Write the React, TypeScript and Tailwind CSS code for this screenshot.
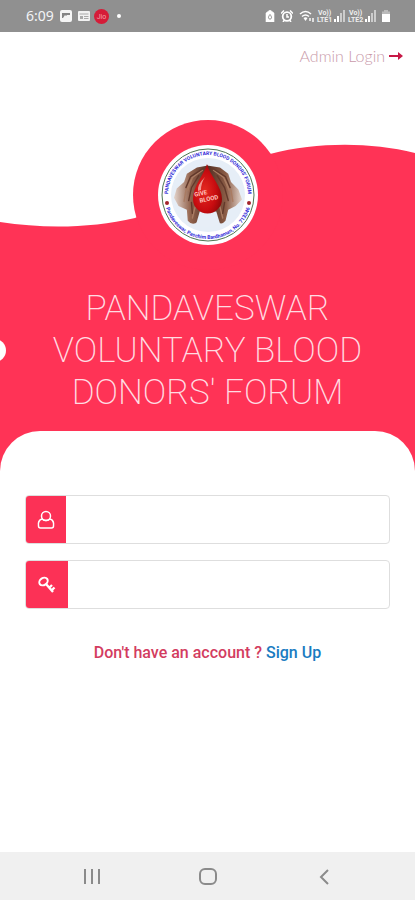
import type { ReactNode } from "react";

function StatusBar() {
  return (
    <header className="flex h-8 shrink-0 items-center justify-between bg-[#909090] pr-6 pl-[26px] text-white">
      <div className="flex items-center">
        <span className="font-['Noto_Sans','Roboto',sans-serif] text-sm text-gray-100">6:09</span>
        <svg className="ml-1.5 h-3 w-3" viewBox="0 0 12 12" aria-hidden="true">
          <rect width="12" height="12" rx="2" fill="#f5f5f5" />
          <path d="M2 8V3h8v2L7 5 6 6 5 5 3 8Z" fill="#858585" />
        </svg>
        <svg className="ml-1.5 h-3 w-3" viewBox="0 0 12 12" aria-hidden="true">
          <rect y="1" width="12" height="10" rx="1" fill="#f2f2f2" />
          <path d="M1.500 4h9M6 6.500h4.500M6 8.500h4.500" stroke="#aaa" strokeWidth="1" />
          <path d="M2 6h3v3H2Z" fill="#aaa" />
        </svg>
        <svg className="ml-1 h-[15px] w-[15px]" viewBox="0 0 15 15" aria-label="Jio">
          <circle cx="7.500" cy="7.500" r="7.500" fill="#d51c38" />
          <text x="7.500" y="10" textAnchor="middle" fontFamily="Roboto, sans-serif" fontSize="7" fill="#f4a0aa">Jio</text>
        </svg>
        <span className="ml-2 h-1 w-1 rounded-full bg-white" />
      </div>
      <div className="flex items-center">
        <svg className="h-3 w-2.5" viewBox="0 0 10 12" aria-hidden="true">
          <path d="M1 3 5 0l4 3v9H1Z" fill="#fff" strokeLinejoin="round" stroke="#fff" strokeWidth=".6" />
          <path d="M5 4.500c2.500 3 1.500 4.500 0 4.500s-2.500-1.500 0-4.500Z" fill="none" stroke="#888" />
        </svg>
        <svg className="ml-1.5 h-3 w-3" viewBox="0 0 12 12" aria-hidden="true">
          <circle cx="6" cy="6.500" r="4.300" fill="none" stroke="#fff" strokeWidth="1.800" />
          <path d="M0 3.500 3 .5M12 3.500 9 .5M2 12l1.500-2M10 12 8.500 10M6 4v3h2" fill="none" stroke="#fff" strokeWidth="1.500" />
        </svg>
        <svg className="ml-1.5 h-3 w-4" viewBox="0 0 16 12" aria-hidden="true">
          <path d="M1 4q5.500-5 11 0M3 6.500q3.500-3 7 0" fill="none" stroke="#fff" strokeWidth="1.600" />
          <path d="m4.500 8 2 3 2-3q-2-1.500-4 0Z" fill="#fff" />
          <path d="M11 8v3M14 8v4" fill="none" stroke="#fff" strokeWidth="1.400" />
        </svg>
        <Signal name="LTE1" />
        <Signal name="LTE2" />
        <svg className="ml-1 h-3 w-2.5" viewBox="0 0 10 12" aria-hidden="true">
          <path d="M3 0h4v1.500h2V5H1V1.500h2Z" fill="#bbb" />
          <path d="M1 4h8v8H1Z" fill="#fff" />
        </svg>
      </div>
    </header>
  );
}

function Signal({ name }: { name: string }) {
  return (
    <svg className="h-3.5 w-[31px]" viewBox="0 0 31 14" aria-hidden="true">
      <g fontFamily="Roboto, sans-serif" fontSize="7" fontWeight="700" fill="#eee">
        <text x="3" y="6">Vo))</text>
        <text x="2" y="13">{name}</text>
      </g>
      <path d="M20 10v3M23 7v6" stroke="#fff" strokeWidth="2" />
      <path d="M26 4v9M29 1v12" stroke="#ccc" strokeWidth="2" />
    </svg>
  );
}

function Emblem() {
  return (
    <svg className="h-[100px] w-[100px]" viewBox="0 0 100 100" role="img" aria-label="Pandaveswar Voluntary Blood Donors' Forum emblem">
      <defs>
        <radialGradient id="drop" cx=".4" cy=".55" r=".65">
          <stop stopColor="#e52a22" />
          <stop offset=".6" stopColor="#c80c10" />
          <stop offset="1" stopColor="#8b0708" />
        </radialGradient>
        <linearGradient id="handLeft">
          <stop stopColor="#e3d4cc" />
          <stop offset=".45" stopColor="#94654f" />
          <stop offset="1" stopColor="#4e2b20" />
        </linearGradient>
        <linearGradient id="handRight">
          <stop stopColor="#4e2b20" />
          <stop offset=".55" stopColor="#8b5c46" />
          <stop offset="1" stopColor="#e3d4cc" />
        </linearGradient>
        <path id="upperArc" d="M10.500 56.300A40 40 0 1 1 89.500 56.300" />
        <path id="lowerArc" d="M6 50A44 44 0 0 0 94 50" />
      </defs>
      <circle cx="50" cy="50" r="50" fill="#fff" />
      <circle cx="50" cy="50" r="46" fill="#fff" stroke="#4f7552" strokeWidth="1" />
      <circle cx="50" cy="50" r="37" fill="#e6eef7" />
      <g transform="translate(4 4) scale(.92)">
        <path d="M50 18 38 20 27 27 24 36 16 43 13 53 18 62 27 66 28 78Q33 84 39 79L43 68 52 60 50 26Z" fill="url(#handLeft)" />
        <path d="M49 18 63 20 72 27 75 36 83 44 87 55 80 62 72 66 69 78Q64 84 60 78L56 68 48 60Z" fill="url(#handRight)" />
        <path d="M41 68h18l4 13Q50 88 37 82Z" fill="#e7eef7" />
        <g fill="none" strokeLinecap="round">
          <path d="m44 23-11 8-5 14M32 33l-6 12-2 12M36 63l-3 12" stroke="#a97b62" strokeWidth="1.500" />
          <path d="m56 23 11 8 6 14M68 33l7 12 2 12M63 63l3 12" stroke="#a97b62" strokeWidth="1.500" />
          <path d="m45 21-14 9-5 12M40 29l-8 13-3 14M32 58l1 12M55 21l14 9 5 12M60 29l8 13 4 14M68 58l-2 12" stroke="#62392b" strokeWidth="1.500" />
        </g>
      </g>
      <path d="M49 19C46 30 35 41 35 54a14.500 14.500 0 0 0 29 0C64 41 52 31 49 19Z" fill="url(#drop)" />
      <path d="M47 32Q39 40 40 46l3-1q0-7 4-13Z" fill="#f5b5ae" opacity=".8" />
      <g fontFamily="Roboto, sans-serif" fontSize="6" fontWeight="700" fill="#ffc3bd" transform="rotate(-12 50 52)">
        <text x="37" y="49">GIVE</text>
        <text x="41" y="56">BLOOD</text>
      </g>
      <g fontFamily="Roboto, sans-serif" fontWeight="700" fill="#3029d8">
        <text fontSize="5" textAnchor="middle">
          <textPath href="#upperArc" startOffset="50%">PANDAVESWAR VOLUNTARY BLOOD DONORS' FORUM</textPath>
        </text>
        <text fontSize="5.200" textAnchor="middle">
          <textPath href="#lowerArc" startOffset="50%">Pandaveswar, Paschim Bardhaman, No. 713346</textPath>
        </text>
      </g>
      <circle cx="9" cy="58" r="2" fill="#a3232b" />
      <circle cx="91" cy="58" r="2" fill="#a3232b" />
    </svg>
  );
}

function Field({ id, label, type, autoComplete, iconWidth, icon }: {
  id: string;
  label: string;
  type: string;
  autoComplete: string;
  iconWidth: string;
  icon: ReactNode;
}) {
  return (
    <div className="flex h-[49px] overflow-hidden rounded-[4px] border border-[#dedede] bg-white">
      <label htmlFor={id} aria-label={label} className={`flex shrink-0 items-center justify-center bg-[#fc3156] text-white ${iconWidth}`}>
        {icon}
      </label>
      <input id={id} type={type} aria-label={label} autoComplete={autoComplete} className="min-w-0 flex-1 px-3 font-['Roboto',sans-serif] text-base outline-none" />
    </div>
  );
}

function NavigationBar() {
  return (
    <nav aria-label="Device navigation" className="flex h-12 shrink-0 items-center justify-center gap-[92px] bg-[#f0f0f0] text-[#8b8b8b]">
      <button type="button" aria-label="Recent apps">
        <svg className="h-6 w-6" viewBox="0 0 24 24" fill="none" stroke="currentColor" strokeWidth="2">
          <path d="M5 5v15M12 5v15M19 5v15" />
        </svg>
      </button>
      <button type="button" aria-label="Home">
        <svg className="h-6 w-6" viewBox="0 0 24 24" fill="none" stroke="currentColor" strokeWidth="2">
          <rect x="4" y="5" width="16" height="15" rx="5" />
        </svg>
      </button>
      <button type="button" aria-label="Back">
        <svg className="h-6 w-6" viewBox="0 0 24 24" fill="none" stroke="currentColor" strokeWidth="2">
          <path d="m16 6-7 7 7 7" />
        </svg>
      </button>
    </nav>
  );
}

export default function App() {
  return (
    <div className="flex min-h-screen flex-col bg-white">
      <StatusBar />
      <main className="flex-1">
        <div className="relative">
          <svg className="absolute inset-x-0 top-[108px] h-[88px] w-full" viewBox="0 0 415 88" preserveAspectRatio="none" aria-hidden="true">
            <path d="M0 82C45 89 92 88 135 78L270 14C318 2 369 2 415 13V88H0Z" fill="#ff3356" />
          </svg>
          <div className="relative flex h-12 items-center justify-end pr-3">
            <a href="#admin" className="flex items-center gap-1 font-['Lato',sans-serif] text-base font-light text-[#c99aaa]">
              Admin Login
              <svg className="h-3 w-3.5" viewBox="0 0 14 12" aria-hidden="true">
                <path d="M0 5h9V2l5 4-5 4V7H0Z" fill="#c71846" />
              </svg>
            </a>
          </div>
          <div className="relative flex justify-center pt-10">
            <div className="flex h-[150px] w-[150px] items-center justify-center rounded-full bg-[#ff3356]">
              <Emblem />
            </div>
          </div>
          <div className="-mt-[42px] bg-[#ff3356] pt-[60px]">
            <h1 className="relative px-10 pb-[17px] text-center font-['Roboto',sans-serif] text-[35px] leading-[42px] font-extralight text-[#ffdce2]">
              <span className="absolute top-[51px] -left-[17px] h-[23px] w-[23px] rounded-full bg-white" aria-hidden="true" />
              PANDAVESWAR VOLUNTARY BLOOD DONORS' FORUM
            </h1>
            <form className="rounded-t-[40px] bg-white px-[25px] pt-16 pb-5" onSubmit={(event) => event.preventDefault()}>
              <div className="flex flex-col gap-4">
                <Field
                  id="username"
                  label="Username"
                  type="text"
                  autoComplete="username"
                  iconWidth="w-10"
                  icon={
                    <svg className="h-5 w-5" viewBox="0 0 20 20" fill="none" stroke="currentColor" strokeWidth="1.500">
                      <circle cx="10" cy="6" r="4.500" />
                      <path d="M6 9C3 10 2 13 2.500 16q0 2 2 2h11q2 0 2-2c.5-3-.5-6-3.500-7-2 2-6 2-8 0Z" />
                    </svg>
                  }
                />
                <Field
                  id="password"
                  label="Password"
                  type="password"
                  autoComplete="current-password"
                  iconWidth="w-[42px]"
                  icon={
                    <svg className="h-5 w-5" viewBox="0 0 20 20" fill="none" stroke="currentColor" strokeWidth="2">
                      <ellipse cx="6.500" cy="6.500" rx="4.500" ry="3.500" transform="rotate(-35 6.500 6.500)" />
                      <path d="m9 9 7 8M12 13l3-3M14.500 15.500l3-3" strokeWidth="2.300" />
                    </svg>
                  }
                />
              </div>
              <p className="mt-8 text-center font-['Roboto',sans-serif] text-base leading-6 font-medium text-[#d33c60]">
                Don't have an account ? <a href="#signup" className="text-[#197bc1]">Sign Up</a>
              </p>
            </form>
          </div>
        </div>
      </main>
      <NavigationBar />
    </div>
  );
}
